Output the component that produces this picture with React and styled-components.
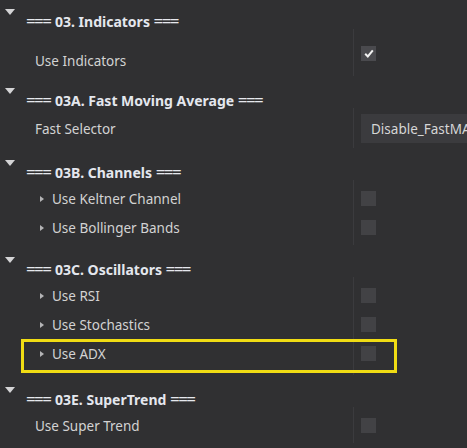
import React from "react";
import styled, { createGlobalStyle, css } from "styled-components";

const sections = [
  {
    title: "03. Indicators",
    rows: [{ label: "Use Indicators", type: "check", checked: true, tall: true }],
  },
  {
    title: "03A. Fast Moving Average",
    rows: [{ label: "Fast Selector", type: "select", value: "Disable_FastMA" }],
  },
  {
    title: "03B. Channels",
    rows: [
      { label: "Use Keltner Channel", type: "check", nested: true },
      { label: "Use Bollinger Bands", type: "check", nested: true },
    ],
  },
  {
    title: "03C. Oscillators",
    rows: [
      { label: "Use RSI", type: "check", nested: true },
      { label: "Use Stochastics", type: "check", nested: true },
      { label: "Use ADX", type: "check", nested: true, highlighted: true },
    ],
  },
  {
    title: "03E. SuperTrend",
    rows: [{ label: "Use Super Trend", type: "check" }],
  },
];

const Equals = () => <Bars>===</Bars>;

const App = () => {
  return (
    <>
      <GlobalStyle />
      <Panel>
        {sections.map((section) => (
          <Section key={section.title}>
            <SectionHead>
              <Caret />
              <Title>
                <Equals /> {section.title} <Equals />
              </Title>
            </SectionHead>
            <Rows>
              {section.rows.map((row) => (
                <Row
                  key={row.label}
                  $tall={row.tall}
                  $select={row.type === "select"}
                  $highlighted={row.highlighted}
                >
                  <Label $nested={row.nested} $tall={row.tall}>
                    {row.nested && <Bullet />}
                    {row.label}
                  </Label>
                  <Value>
                    {row.type === "select" ? (
                      <Select>{row.value}</Select>
                    ) : (
                      <Checkbox $checked={row.checked} $tall={row.tall}>
                        {row.checked && (
                          <svg width="10" height="9" viewBox="0 0 10 9">
                            <path
                              d="M1.2 4.8 L3.8 7.4 L8.8 1.4"
                              fill="none"
                              stroke="#f2f2f2"
                              strokeWidth="2"
                            />
                          </svg>
                        )}
                      </Checkbox>
                    )}
                  </Value>
                </Row>
              ))}
            </Rows>
          </Section>
        ))}
      </Panel>
    </>
  );
};

export default App;

const GlobalStyle = createGlobalStyle`
  html, body {
    margin: 0;
    padding: 0;
    background: #303032;
    overflow: hidden;
  }
  body {
    font-family: "Noto Sans", "Open Sans", sans-serif;
    color: #d2d2d2;
  }
`;

const Panel = styled.div`
  width: 467px;
  height: 448px;
  display: flex;
  flex-direction: column;
  gap: 3px;
  background: #303032;
  overflow: hidden;
`;

const Section = styled.div`
  display: flex;
  flex-direction: column;
`;

const SectionHead = styled.div`
  height: 29px;
  display: flex;
  align-items: flex-start;
`;

const Caret = styled.span`
  width: 0;
  height: 0;
  margin: 9px 11px 0 5px;
  border-left: 5.5px solid transparent;
  border-right: 5.5px solid transparent;
  border-top: 6px solid #d4d4d6;
`;

const Title = styled.div`
  padding-top: 15px;
  line-height: 14px;
  font-size: 14px;
  font-weight: 700;
  color: #e4e7ee;
  white-space: nowrap;
`;

const Bars = styled.span`
  font-size: 17px;
  line-height: 0;
  font-weight: 400;
  letter-spacing: -1.6px;
  margin-right: 1px;
  color: #e6e8ee;
`;

const Rows = styled.div`
  padding: 4px 0 3px;
  background: linear-gradient(#3b3b3e, #3b3b3e) no-repeat 353px 0 / 1px 100%;
`;

const Row = styled.div`
  position: relative;
  display: flex;
  align-items: center;
  height: ${(p) => (p.$select ? "33px" : "29px")};

  ${(p) =>
    p.$tall &&
    css`
      height: 40px;
      align-items: flex-start;
    `}

  ${(p) =>
    p.$highlighted &&
    css`
      margin-bottom: 4px;

      &::after {
        content: "";
        position: absolute;
        left: 21px;
        top: 0;
        width: 376px;
        height: 34px;
        box-sizing: border-box;
        border: 3px solid #f0dc14;
      }
    `}
`;

const Label = styled.div`
  width: 353px;
  flex: none;
  box-sizing: border-box;
  display: flex;
  align-items: center;
  padding-left: ${(p) => (p.$nested ? "40px" : "35px")};
  padding-top: ${(p) => (p.$tall ? "20px" : "0")};
  font-size: 13.5px;
  line-height: 16px;
  color: #d3d3d3;
  white-space: nowrap;
`;

const Bullet = styled.span`
  width: 0;
  height: 0;
  margin-right: 8px;
  border-top: 3px solid transparent;
  border-bottom: 3px solid transparent;
  border-left: 4px solid #b4b4b6;
`;

const Value = styled.div`
  flex: 1;
  display: flex;
  align-items: center;
  align-self: stretch;
  padding-left: 8px;
  overflow: hidden;
`;

const Checkbox = styled.div`
  width: 15px;
  height: 15px;
  flex: none;
  display: flex;
  align-items: center;
  justify-content: center;
  background: ${(p) => (p.$checked ? "#4a4a4e" : "#424245")};
  align-self: ${(p) => (p.$tall ? "flex-start" : "center")};
  margin-top: ${(p) => (p.$tall ? "13px" : "0")};
`;

const Select = styled.div`
  width: 150px;
  height: 29px;
  flex: none;
  box-sizing: border-box;
  display: flex;
  align-items: center;
  padding-left: 10px;
  background: #3b3b3e;
  font-size: 13.5px;
  color: #d6d6d6;
  white-space: nowrap;
`;
